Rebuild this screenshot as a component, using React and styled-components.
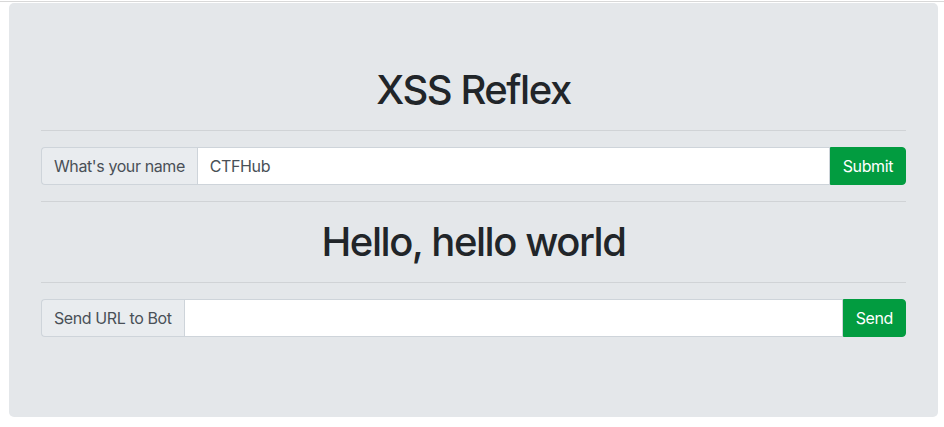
import React from "react";
import styled, { createGlobalStyle } from "styled-components";

const GlobalStyle = createGlobalStyle`
  body {
    margin: 0;
    background: #ffffff;
    font-family: Inter, "Liberation Sans", sans-serif;
    color: #212529;
  }
  * { box-sizing: border-box; }
`;

const Page = styled.div`
  margin-top: 1px;
  border-top: 1px solid #d8d8d8;
  padding: 1px 6px 0 9px;
`;

const Jumbotron = styled.div`
  background: #e4e7ea;
  border-radius: 5px;
  padding: 63px 32px 64px;
`;

const Title = styled.h1`
  margin: 0 0 8px;
  font-size: 40px;
  font-weight: 500;
  line-height: 48px;
  text-align: center;
  letter-spacing: -1.45px;
  color: #212529;
`;

const Rule = styled.hr`
  margin: 16px 0;
  border: 0;
  border-top: 1px solid #d0d3d6;
`;

const Form = styled.form`
  margin: 0 0 16px;
`;

const Group = styled.div`
  display: flex;
  height: 38px;
`;

const Label = styled.span`
  display: flex;
  align-items: center;
  padding: 0 12px;
  font-size: 16px;
  letter-spacing: -0.4px;
  color: #495057;
  background: #e9ecef;
  border: 1px solid #ced4da;
  border-right: 0;
  border-radius: 4px 0 0 4px;
  white-space: nowrap;
`;

const Input = styled.input`
  flex: 1;
  min-width: 0;
  padding: 0 12px;
  font-family: inherit;
  font-size: 16px;
  letter-spacing: -0.4px;
  color: #495057;
  background: #fff;
  border: 1px solid #ced4da;
  outline: none;
`;

const Button = styled.button`
  padding: 0 12px;
  font-family: inherit;
  font-size: 16px;
  letter-spacing: -0.4px;
  color: #fff;
  background: #029c40;
  border: 1px solid #029c40;
  border-radius: 0 4px 4px 0;
`;

function App() {
  return (
    <>
      <GlobalStyle />
      <Page>
        <Jumbotron>
          <Title>XSS Reflex</Title>
          <Rule />
          <Form onSubmit={(e) => e.preventDefault()}>
            <Group>
              <Label>What's your name</Label>
              <Input defaultValue="CTFHub" />
              <Button>Submit</Button>
            </Group>
          </Form>
          <Rule />
          <Title>Hello, hello world</Title>
          <Rule />
          <Form onSubmit={(e) => e.preventDefault()}>
            <Group>
              <Label>Send URL to Bot</Label>
              <Input />
              <Button>Send</Button>
            </Group>
          </Form>
        </Jumbotron>
      </Page>
    </>
  );
}

export default App;
